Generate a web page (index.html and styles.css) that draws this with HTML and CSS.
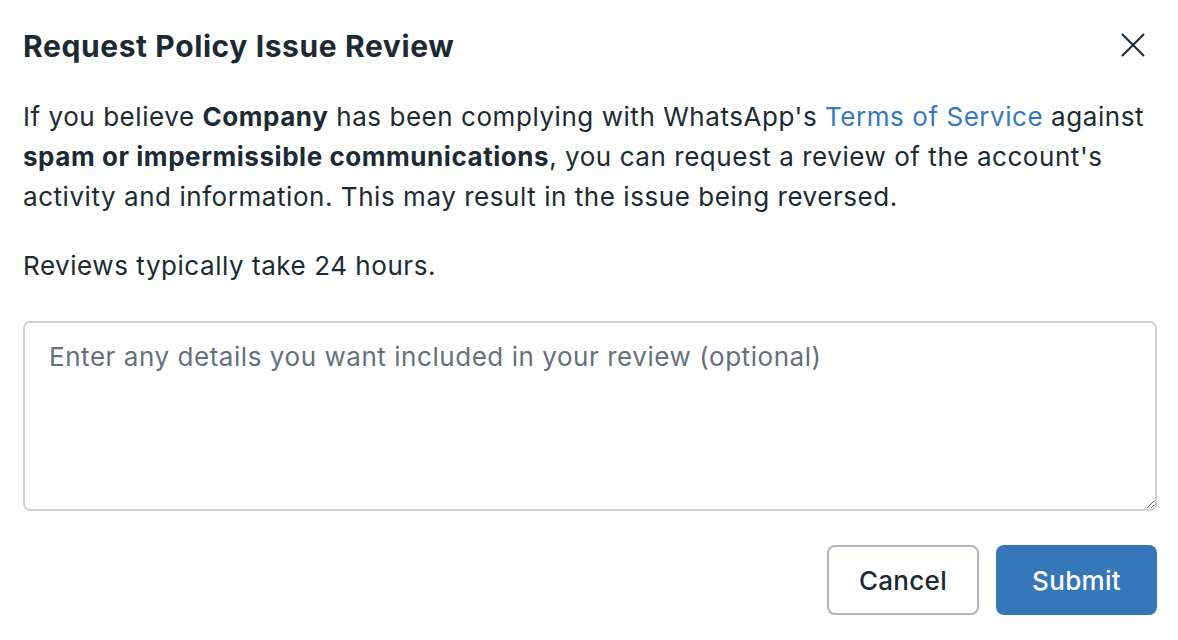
FILE: index.html
```html
<!DOCTYPE html>
<html lang="en">
<head>
<meta charset="utf-8">
<title>Request Policy Issue Review</title>
<link rel="stylesheet" href="styles.css">
</head>
<body>
<div class="dialog">
  <div class="header">
    <h1 class="title">Request Policy Issue Review</h1>
    <button class="close" aria-label="Close">
      <svg width="24" height="24" viewBox="0 0 24 24"><path d="M1.5 1.5L22.5 22.5M22.5 1.5L1.5 22.5" stroke="#1c2b33" stroke-width="2" fill="none" stroke-linecap="round"/></svg>
    </button>
  </div>
  <p class="text">If you believe <b>Company</b> has been complying with WhatsApp's <a class="link" href="#">Terms of Service</a> against <b>spam or impermissible communications</b>, you can request a review of the account's activity and information. This may result in the issue being reversed.</p>
  <p class="text note">Reviews typically take 24 hours.</p>
  <textarea class="details" placeholder="Enter any details you want included in your review (optional)"></textarea>
  <div class="actions">
    <button class="btn btn-cancel">Cancel</button>
    <button class="btn btn-submit">Submit</button>
  </div>
</div>
</body>
</html>
```
FILE: styles.css
```css
html, body {
  margin: 0;
  padding: 0;
  background: #ffffff;
}
body {
  font-family: Inter, "Noto Sans", sans-serif;
  color: #1c2b33;
}
.dialog {
  padding: 28px 21px 0 23px;
}
.header {
  display: flex;
  justify-content: space-between;
  align-items: center;
}
.title {
  margin: 0;
  font-size: 30px;
  line-height: 36px;
  font-weight: 700;
  letter-spacing: 0.6px;
}
.close {
  background: none;
  border: 0;
  padding: 0;
  width: 24px;
  height: 24px;
  margin-right: 12px;
  margin-top: -3px;
  display: flex;
}
.text {
  margin: 33px 0 0 0;
  font-size: 26px;
  line-height: 40px;
  font-weight: 400;
  letter-spacing: 0.55px;
}
.text b {
  font-weight: 700;
}
.link {
  color: #3578c0;
  text-decoration: none;
}
.note {
  margin-top: 29px;
}
.details {
  display: block;
  box-sizing: border-box;
  width: 100%;
  height: 190px;
  margin-top: 35px;
  padding: 14px 24px;
  border: 2px solid #cfd3d8;
  border-radius: 7px;
  font-family: Inter, "Noto Sans", sans-serif;
  font-size: 26px;
  line-height: 40px;
  letter-spacing: 0.55px;
  color: #1c2b33;
  resize: vertical;
  outline: none;
}
.details::placeholder {
  color: #67707a;
}
.actions {
  display: flex;
  justify-content: flex-end;
  gap: 17px;
  margin-top: 34px;
}
.btn {
  height: 70px;
  border-radius: 8px;
  font-family: Inter, "Noto Sans", sans-serif;
  font-size: 26px;
  font-weight: 500;
  letter-spacing: 0.3px;
  padding: 0;
  cursor: pointer;
}
.btn-cancel {
  width: 152px;
  background: #ffffff;
  border: 2px solid #aeb5be;
  color: #1c2b33;
}
.btn-submit {
  width: 161px;
  background: #3677ba;
  border: 0;
  color: #ffffff;
}
```
